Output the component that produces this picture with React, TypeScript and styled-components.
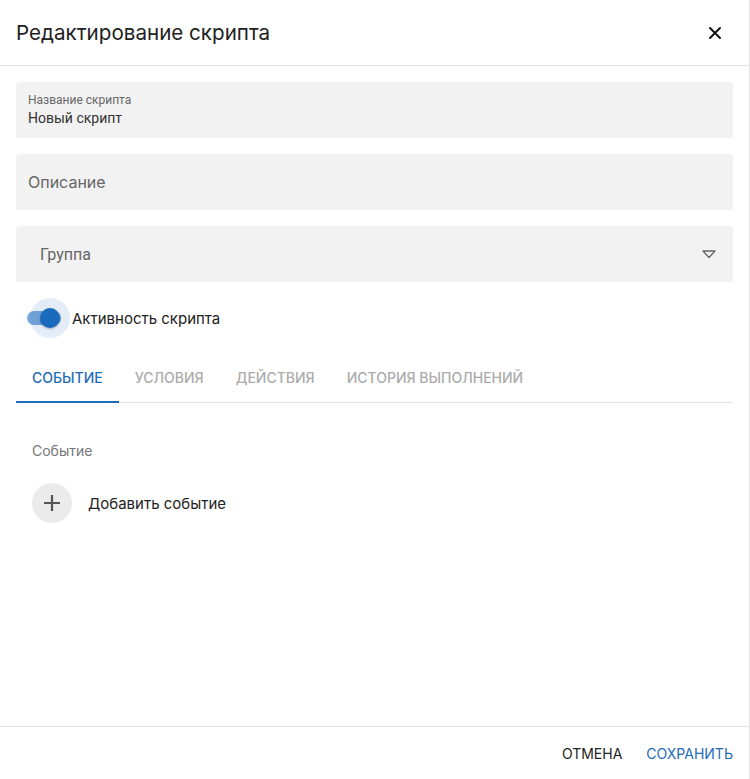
import React from 'react';
import styled, { createGlobalStyle } from 'styled-components';

const GlobalStyle = createGlobalStyle`
  html, body {
    margin: 0;
    padding: 0;
    background: #fff;
    font-family: Roboto, 'Noto Sans', sans-serif;
  }
  * { box-sizing: border-box; }
`;

const inter = "Inter, 'Noto Sans', sans-serif";

const Dialog = styled.div`
  height: 100vh;
  display: flex;
  flex-direction: column;
  background: #fff;
  border-right: 1px solid #e6e6e6;
`;

const Header = styled.div`
  height: 66px;
  display: flex;
  align-items: center;
  justify-content: space-between;
  padding: 0 16px;
  border-bottom: 1px solid #e0e0e0;
`;

const Title = styled.h2`
  margin: 0;
  font-family: ${inter};
  font-size: 20.6px;
  font-weight: 400;
  color: #222;
`;

const CloseButton = styled.button`
  width: 32px;
  height: 32px;
  display: flex;
  align-items: center;
  justify-content: center;
  border: none;
  background: none;
  padding: 0;
  margin-right: 2px;
  cursor: pointer;
`;

const Body = styled.div`
  flex: 1;
  display: flex;
  flex-direction: column;
  padding: 16px 16px 0;
  gap: 16px;
`;

const Field = styled.div<{ $padLeft?: number }>`
  height: 56px;
  background: #f2f2f2;
  border-radius: 4px 4px 0 0;
  display: flex;
  flex-direction: column;
  justify-content: center;
  padding: 0 ${(p) => p.$padLeft ?? 12}px;
`;

const SmallLabel = styled.div`
  font-size: 12px;
  color: #666;
  line-height: 16px;
`;

const Value = styled.div`
  font-size: 14px;
  color: #333;
  line-height: 20px;
`;

const Placeholder = styled.div<{ $inter?: boolean }>`
  font-size: 16px;
  color: #666;
  font-family: ${(p) => (p.$inter ? inter : 'inherit')};
`;

const SelectField = styled(Field)`
  flex-direction: row;
  align-items: center;
  justify-content: space-between;
`;

const SwitchRow = styled.div`
  height: 40px;
  display: flex;
  align-items: center;
  gap: 5px;
  padding-left: 11px;
`;

const SwitchBox = styled.div`
  position: relative;
  width: 40px;
  height: 40px;
  display: flex;
  align-items: center;
`;

const Track = styled.div`
  width: 34px;
  height: 14px;
  border-radius: 7px;
  background: #79a8da;
`;

const Halo = styled.div`
  position: absolute;
  left: 3px;
  top: 0;
  width: 40px;
  height: 40px;
  border-radius: 50%;
  background: rgba(30, 107, 189, 0.12);
`;

const Thumb = styled.div`
  position: absolute;
  left: 13px;
  top: 10px;
  width: 20px;
  height: 20px;
  border-radius: 50%;
  background: #1a6bbd;
  box-shadow: 0 1px 2px rgba(0, 0, 0, 0.3);
`;

const SwitchLabel = styled.span`
  font-family: ${inter};
  font-size: 15px;
  color: #222;
`;

const Tabs = styled.div`
  display: flex;
  height: 49px;
  border-bottom: 1px solid #e0e0e0;
`;

const Tab = styled.div<{ $active?: boolean }>`
  padding: 0 16px;
  display: flex;
  align-items: center;
  font-family: ${inter};
  font-size: 14px;
  font-weight: 500;
  text-transform: uppercase;
  color: ${(p) => (p.$active ? '#1e6bb8' : '#ababab')};
  border-bottom: 2px solid ${(p) => (p.$active ? '#1e6bb8' : 'transparent')};
  margin-bottom: -1px;
`;

const Panel = styled.div`
  padding: 38px 16px 0;
  display: flex;
  flex-direction: column;
  gap: 22px;
`;

const PanelLabel = styled.div`
  font-family: ${inter};
  font-size: 14px;
  color: #777;
  line-height: 20px;
`;

const AddRow = styled.div`
  display: flex;
  align-items: center;
  gap: 16px;
`;

const AddCircle = styled.div`
  width: 40px;
  height: 40px;
  border-radius: 50%;
  background: #ebebeb;
  display: flex;
  align-items: center;
  justify-content: center;
`;

const AddText = styled.span`
  font-family: ${inter};
  font-size: 15px;
  color: #222;
`;

const Footer = styled.div`
  height: 53px;
  border-top: 1px solid #e0e0e0;
  display: flex;
  align-items: center;
  justify-content: flex-end;
  padding: 0 8px;
  gap: 8px;
`;

const FooterButton = styled.button<{ $primary?: boolean }>`
  border: none;
  background: none;
  padding: 6px 8px;
  font-family: ${inter};
  font-size: 14px;
  text-transform: uppercase;
  color: ${(p) => (p.$primary ? '#1e6bb8' : '#222')};
  cursor: pointer;
`;

export default function App() {
  return (
    <>
      <GlobalStyle />
      <Dialog>
        <Header>
          <Title>Редактирование скрипта</Title>
          <CloseButton aria-label="close">
            <svg width="14" height="14" viewBox="0 0 14 14">
              <path d="M2 2 L12 12 M12 2 L2 12" stroke="#111" strokeWidth="2" strokeLinecap="round" />
            </svg>
          </CloseButton>
        </Header>
        <Body>
          <Field>
            <SmallLabel>Название скрипта</SmallLabel>
            <Value>Новый скрипт</Value>
          </Field>
          <Field>
            <Placeholder $inter>Описание</Placeholder>
          </Field>
          <SelectField $padLeft={24}>
            <Placeholder>Группа</Placeholder>
            <svg width="16" height="12" viewBox="0 0 16 12" style={{ marginRight: -8 }}>
              <path d="M2 3 L14 3 L8 9.5 Z" fill="none" stroke="#666" strokeWidth="1.3" strokeLinejoin="round" />
            </svg>
          </SelectField>
          <SwitchRow>
            <SwitchBox>
              <Track />
              <Halo />
              <Thumb />
            </SwitchBox>
            <SwitchLabel>Активность скрипта</SwitchLabel>
          </SwitchRow>
          <div>
            <Tabs>
              <Tab $active>Событие</Tab>
              <Tab>Условия</Tab>
              <Tab>Действия</Tab>
              <Tab>История выполнений</Tab>
            </Tabs>
            <Panel>
              <PanelLabel>Событие</PanelLabel>
              <AddRow>
                <AddCircle>
                  <svg width="18" height="18" viewBox="0 0 18 18">
                    <path d="M9 1 V17 M1 9 H17" stroke="#555" strokeWidth="2.2" />
                  </svg>
                </AddCircle>
                <AddText>Добавить событие</AddText>
              </AddRow>
            </Panel>
          </div>
        </Body>
        <Footer>
          <FooterButton>Отмена</FooterButton>
          <FooterButton $primary>Сохранить</FooterButton>
        </Footer>
      </Dialog>
    </>
  );
}
